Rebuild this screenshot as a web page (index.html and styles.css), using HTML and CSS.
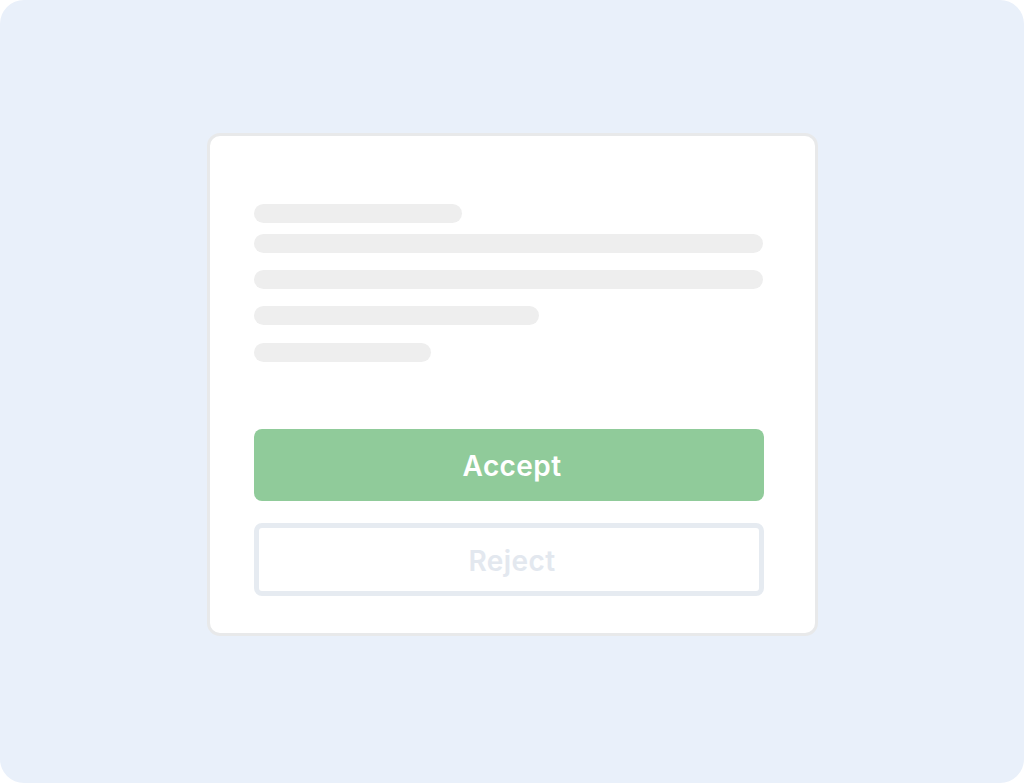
FILE: index.html
```html
<!DOCTYPE html>
<html>
<head>
<meta charset="utf-8">
<link rel="stylesheet" href="styles.css">
</head>
<body>
<div class="frame">
  <div class="card">
    <div class="skeleton">
      <div class="line w1"></div>
      <div class="line w2 g1"></div>
      <div class="line w2 g2"></div>
      <div class="line w3 g2"></div>
      <div class="line w4 g3"></div>
    </div>
    <button class="btn accept">Accept</button>
    <button class="btn reject">Reject</button>
  </div>
</div>
</body>
</html>
```

FILE: styles.css
```css
html, body {
  margin: 0;
  padding: 0;
  background: #ffffff;
}
.frame {
  width: 1024px;
  height: 783px;
  background: #e9f0fa;
  border-radius: 24px;
  box-sizing: border-box;
  padding: 133px 0 0 207px;
}
.card {
  width: 611px;
  height: 503px;
  box-sizing: border-box;
  background: #ffffff;
  border: 3px solid #e8e9ea;
  border-radius: 13px;
  padding: 68px 50px 0 44px;
  display: flex;
  flex-direction: column;
}
.skeleton {
  display: flex;
  flex-direction: column;
}
.line {
  height: 19px;
  border-radius: 10px;
  background: #eeeeee;
}
.w1 { width: 208px; }
.w2 { width: 509px; }
.w3 { width: 285px; }
.w4 { width: 177px; }
.g1 { margin-top: 11px; }
.g2 { margin-top: 17px; }
.g3 { margin-top: 18px; }
.btn {
  display: flex;
  align-items: center;
  justify-content: center;
  width: 510px;
  box-sizing: border-box;
  border-radius: 8px;
  font-family: "Inter", "Open Sans", sans-serif;
  font-weight: 600;
  font-size: 28px;
  letter-spacing: 0.4px;
  padding: 2px 0 0 6px;
}
.accept {
  margin-top: 67px;
  height: 72px;
  background: #90cb9a;
  color: #ffffff;
  border: none;
}
.reject {
  margin-top: 22px;
  height: 73px;
  background: #ffffff;
  color: #e3e8ef;
  border: 5px solid #e6ebf1;
}
```
